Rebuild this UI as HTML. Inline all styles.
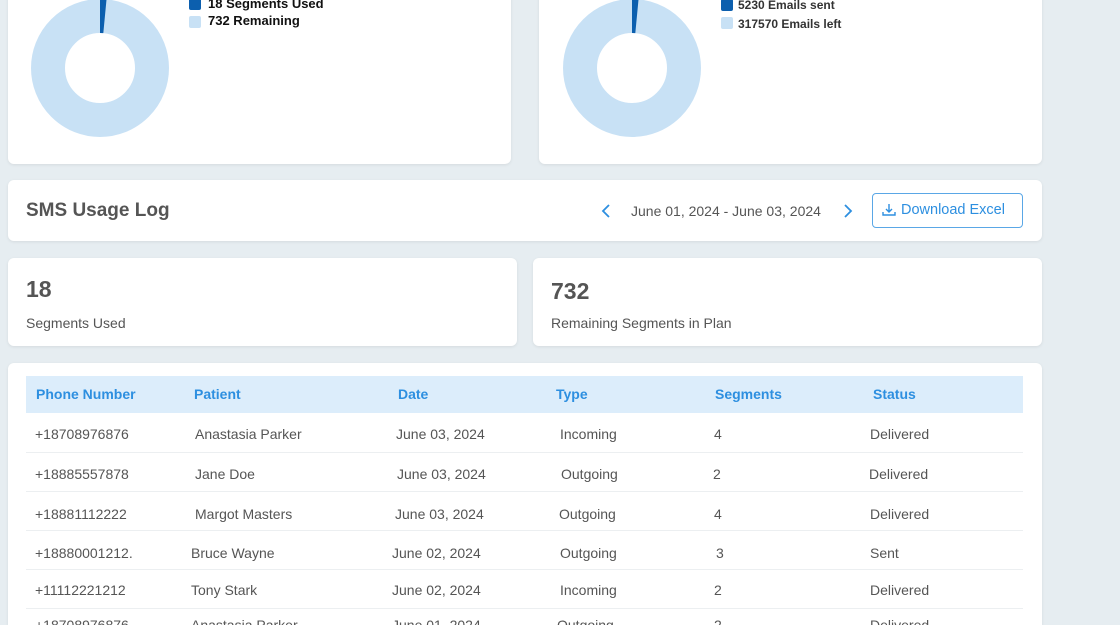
<!DOCTYPE html>
<html style="overflow:hidden;height:625px"><head><meta charset="utf-8"><style>
*{margin:0;padding:0;box-sizing:border-box}
body{width:1120px;height:625px;overflow:hidden;background:#e6edf1;font-family:"Liberation Sans",sans-serif;position:relative;color:#555}
.card{position:absolute;background:#fff;border-radius:6px;box-shadow:0 1px 3px rgba(0,0,0,.08)}
.a{position:absolute;white-space:nowrap}
.leg{font-size:13px;font-weight:bold;color:#111}
.sq{position:absolute;width:12px;height:12px;border-radius:2px}
.th{position:absolute;top:386px;font-size:14px;font-weight:bold;color:#2d8fe0}
.td{position:absolute;font-size:14px;color:#555}
.ln{position:absolute;left:26px;width:997px;height:1px;background:#eceff1}
</style></head><body>
<div class="card" style="left:8px;top:-10px;width:503px;height:174px"></div>
<div class="card" style="left:539px;top:-10px;width:503px;height:174px"></div>
<svg class="a" style="left:30px;top:-2px" width="140" height="140"><circle cx="70" cy="70" r="52" fill="none" stroke="#c8e1f5" stroke-width="34"/><circle cx="70" cy="70" r="52" fill="none" stroke="#0c5fae" stroke-width="34" stroke-dasharray="5 400" transform="rotate(-90 70 70)"/></svg>
<svg class="a" style="left:562px;top:-2px" width="140" height="140"><circle cx="70" cy="70" r="52" fill="none" stroke="#c8e1f5" stroke-width="34"/><circle cx="70" cy="70" r="52" fill="none" stroke="#0c5fae" stroke-width="34" stroke-dasharray="5 400" transform="rotate(-90 70 70)"/></svg>
<div class="sq" style="left:189px;top:-2px;background:#0c5fae"></div>
<div class="a leg" style="left:208px;top:-4px">18 Segments Used</div>
<div class="sq" style="left:189px;top:16px;background:#c8e1f5"></div>
<div class="a leg" style="left:208px;top:13px">732 Remaining</div>
<div class="sq" style="left:721px;top:-1px;background:#0c5fae"></div>
<div class="a leg" style="left:738px;top:-2px;font-size:12px;color:#333">5230 Emails sent</div>
<div class="sq" style="left:721px;top:17px;background:#c8e1f5"></div>
<div class="a leg" style="left:738px;top:17px;font-size:12px;color:#333">317570 Emails left</div>

<div class="card" style="left:8px;top:180px;width:1034px;height:61px"></div>
<div class="a" style="left:26px;top:200px;font-size:19px;font-weight:bold;color:#555">SMS Usage Log</div>
<svg class="a" style="left:601px;top:203px" width="10" height="16"><path d="M8 2L2 8L8 14" fill="none" stroke="#2d8fe0" stroke-width="1.8"/></svg>
<div class="a" style="left:631px;top:203px;font-size:14px;color:#555">June 01, 2024 - June 03, 2024</div>
<svg class="a" style="left:843px;top:203px" width="10" height="16"><path d="M2 2L8 8L2 14" fill="none" stroke="#2d8fe0" stroke-width="1.8"/></svg>
<div class="a" style="left:872px;top:193px;width:151px;height:35px;border:1px solid #5aa7e6;border-radius:4px"></div>
<svg class="a" style="left:882px;top:203px" width="14" height="14"><path d="M7 1V9M4 6L7 9L10 6M1 9V12H13V9" fill="none" stroke="#2d8fe0" stroke-width="1.4"/></svg>
<div class="a" style="left:901px;top:202px;font-size:14.5px;color:#2d8fe0">Download Excel</div>

<div class="card" style="left:8px;top:258px;width:509px;height:88px"></div>
<div class="card" style="left:533px;top:258px;width:509px;height:88px"></div>
<div class="a" style="left:26px;top:276px;font-size:23px;font-weight:bold;color:#555">18</div>
<div class="a" style="left:26px;top:315px;font-size:14px">Segments Used</div>
<div class="a" style="left:551px;top:278px;font-size:23px;font-weight:bold;color:#555">732</div>
<div class="a" style="left:551px;top:315px;font-size:14px">Remaining Segments in Plan</div>

<div class="card" style="left:8px;top:363px;width:1034px;height:262px;border-radius:6px 6px 0 0"></div>
<div class="a" style="left:26px;top:376px;width:997px;height:37px;background:#dcedfb"></div>
<div class="th" style="left:36px">Phone Number</div><div class="th" style="left:194px">Patient</div><div class="th" style="left:398px">Date</div><div class="th" style="left:556px">Type</div><div class="th" style="left:715px">Segments</div><div class="th" style="left:873px">Status</div>
<div class="ln" style="top:452px"></div><div class="ln" style="top:491px"></div><div class="ln" style="top:530px"></div><div class="ln" style="top:569px"></div><div class="ln" style="top:608px"></div>
<div class="td" style="left:35px;top:426px">+18708976876</div><div class="td" style="left:195px;top:426px">Anastasia Parker</div><div class="td" style="left:396px;top:426px">June 03, 2024</div><div class="td" style="left:560px;top:426px">Incoming</div><div class="td" style="left:714px;top:426px">4</div><div class="td" style="left:870px;top:426px">Delivered</div>
<div class="td" style="left:35px;top:466px">+18885557878</div><div class="td" style="left:195px;top:466px">Jane Doe</div><div class="td" style="left:397px;top:466px">June 03, 2024</div><div class="td" style="left:561px;top:466px">Outgoing</div><div class="td" style="left:713px;top:466px">2</div><div class="td" style="left:869px;top:466px">Delivered</div>
<div class="td" style="left:35px;top:506px">+18881112222</div><div class="td" style="left:195px;top:506px">Margot Masters</div><div class="td" style="left:395px;top:506px">June 03, 2024</div><div class="td" style="left:559px;top:506px">Outgoing</div><div class="td" style="left:714px;top:506px">4</div><div class="td" style="left:870px;top:506px">Delivered</div>
<div class="td" style="left:35px;top:545px">+18880001212.</div><div class="td" style="left:191px;top:545px">Bruce Wayne</div><div class="td" style="left:392px;top:545px">June 02, 2024</div><div class="td" style="left:560px;top:545px">Outgoing</div><div class="td" style="left:716px;top:545px">3</div><div class="td" style="left:870px;top:545px">Sent</div>
<div class="td" style="left:35px;top:582px">+11112221212</div><div class="td" style="left:191px;top:582px">Tony Stark</div><div class="td" style="left:392px;top:582px">June 02, 2024</div><div class="td" style="left:560px;top:582px">Incoming</div><div class="td" style="left:714px;top:582px">2</div><div class="td" style="left:870px;top:582px">Delivered</div>
<div class="td" style="left:35px;top:617px">+18708976876</div><div class="td" style="left:191px;top:617px">Anastasia Parker</div><div class="td" style="left:392px;top:617px">June 01, 2024</div><div class="td" style="left:557px;top:617px">Outgoing</div><div class="td" style="left:714px;top:617px">2</div><div class="td" style="left:870px;top:617px">Delivered</div>
</body></html>
